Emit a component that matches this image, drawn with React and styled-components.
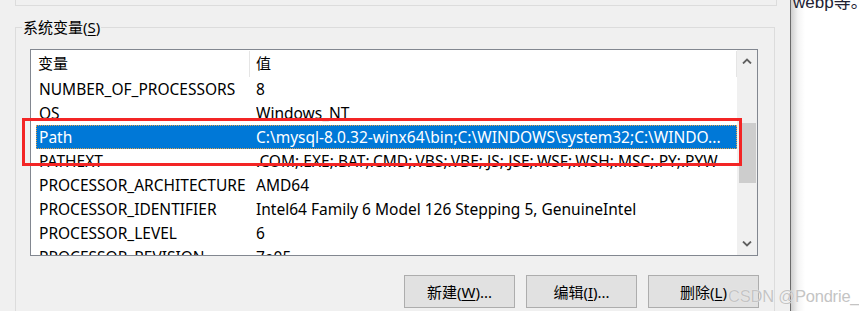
import React from "react";
import styled, { createGlobalStyle } from "styled-components";

// *** Global ***

const GlobalStyle = createGlobalStyle`
  html, body {
    margin: 0;
    padding: 0;
    background: #ffffff;
    overflow: hidden;
  }
`;

const FONT = `"Noto Sans", "Noto Sans CJK SC", sans-serif`;

// *** Styled components ***

const Page = styled.div`
  display: flex;
  width: 859px;
  height: 311px;
  overflow: hidden;
  font-family: ${FONT};
  font-size: 15px;
  color: #000;
  position: relative;
`;

const Dialog = styled.div`
  width: 790px;
  flex-shrink: 0;
  background: #f0f0f0;
  padding-left: 15px;
  box-sizing: border-box;
  display: flex;
  flex-direction: column;
`;

const UpperGroup = styled.div`
  width: 760px;
  height: 5px;
  box-sizing: content-box;
  border: 1px solid #dcdcdc;
  border-top: none;
`;

const GroupBox = styled.div`
  position: relative;
  flex: 1;
  width: 760px;
  margin-top: 21px;
  box-sizing: border-box;
  border: 1px solid #dcdcdc;
  border-bottom: none;
  padding: 21px 0 0 14px;
`;

const Legend = styled.span`
  position: absolute;
  top: -11px;
  left: 6px;
  padding: 0 1px;
  background: #f0f0f0;
  line-height: 20px;
`;

const Key = styled.span`
  text-decoration: underline;
  text-underline-offset: 2px;
`;

const ListBox = styled.div`
  width: 728px;
  height: 207px;
  box-sizing: border-box;
  border: 1px solid #828790;
  background: #fff;
  display: flex;
  overflow: hidden;
`;

const ListArea = styled.div`
  flex: 1;
  min-width: 0;
  overflow: hidden;
`;

const Header = styled.div`
  display: flex;
  height: 27px;
  line-height: 27px;
`;

const HeaderCell = styled.div`
  box-sizing: border-box;
  width: ${(p) => (p.$width ? `${p.$width}px` : "auto")};
  flex: ${(p) => (p.$width ? "none" : "1")};
  padding-left: ${(p) => p.$pad}px;
  position: relative;

  &::after {
    content: "";
    position: absolute;
    right: 0;
    top: 1px;
    bottom: 0;
    width: 1px;
    background: #e5e5e5;
  }
`;

const Row = styled.div`
  display: grid;
  grid-template-columns: 220px 1fr;
  height: 24px;
  line-height: 24px;
  font-size: 15.5px;
  margin-left: 5px;
  box-sizing: border-box;
  white-space: nowrap;
  background: ${(p) => (p.$selected ? "#0078d7" : "transparent")};
  color: ${(p) => (p.$selected ? "#fff" : "#000")};
  outline: ${(p) => (p.$selected ? "1px dotted #e8a24a" : "none")};
  outline-offset: -1px;
`;

const Cell = styled.div`
  padding-left: ${(p) => p.$pad}px;
  overflow: hidden;
`;

const ScrollBar = styled.div`
  width: 20px;
  flex-shrink: 0;
  background: #f0f0f0;
  display: flex;
  flex-direction: column;
`;

const ScrollButton = styled.div`
  height: 22px;
  display: flex;
  align-items: center;
  justify-content: center;
`;

const Track = styled.div`
  flex: 1;
`;

const Thumb = styled.div`
  width: 17px;
  height: 60px;
  margin: 51px auto 0;
  background: #cdcdcd;
`;

const ButtonRow = styled.div`
  width: 729px;
  display: flex;
  justify-content: flex-end;
  gap: 11px;
  margin-top: 19px;
`;

const Button = styled.div`
  width: 111px;
  height: 33px;
  box-sizing: border-box;
  border: 1px solid #adadad;
  background: #e1e1e1;
  display: flex;
  align-items: center;
  justify-content: center;
`;

const Highlight = styled.div`
  position: absolute;
  left: 22px;
  top: 118px;
  width: 720px;
  height: 48px;
  box-sizing: border-box;
  border: 3px solid #f32525;
  pointer-events: none;
`;

const Watermark = styled.div`
  position: absolute;
  left: 728px;
  top: 284px;
  font-family: "Liberation Sans", Arial, sans-serif;
  font-size: 16.5px;
  line-height: 24px;
  letter-spacing: -0.2px;
  white-space: nowrap;
  color: #c4c4c4;
  text-shadow: 0 0 1px #fff;
`;

const RightPane = styled.div`
  flex: 1;
  border-left: 1px solid #6b6b6b;
  background: linear-gradient(to right, #cfcfcf 0, #f4f4f4 7px, #fff 14px);
  overflow: hidden;
`;

const PaneText = styled.div`
  margin: -7px 0 0 2px;
  font-family: "Liberation Sans", "Noto Sans CJK SC", sans-serif;
  font-size: 17px;
  line-height: 20px;
  color: #222233;
  white-space: nowrap;
`;

// *** Data ***

const rows = [
  ["NUMBER_OF_PROCESSORS", "8"],
  ["OS", "Windows_NT"],
  ["Path", "C:\\mysql-8.0.32-winx64\\bin;C:\\WINDOWS\\system32;C:\\WINDO..."],
  ["PATHEXT", ".COM;.EXE;.BAT;.CMD;.VBS;.VBE;.JS;.JSE;.WSF;.WSH;.MSC;.PY;.PYW"],
  ["PROCESSOR_ARCHITECTURE", "AMD64"],
  ["PROCESSOR_IDENTIFIER", "Intel64 Family 6 Model 126 Stepping 5, GenuineIntel"],
  ["PROCESSOR_LEVEL", "6"],
  ["PROCESSOR_REVISION", "7e05"],
];

const Chevron = ({ up }) => (
  <svg width="10" height="6" viewBox="0 0 10 6">
    <polyline
      points={up ? "1,5.5 5,1.5 9,5.5" : "1,0.5 5,4.5 9,0.5"}
      fill="none"
      stroke="#606060"
      strokeWidth="1.8"
    />
  </svg>
);

// *** App ***

export default function App() {
  return (
    <Page>
      <GlobalStyle />
      <Dialog>
        <UpperGroup />
        <GroupBox>
          <Legend>
            系统变量(<Key>S</Key>)
          </Legend>
          <ListBox>
            <ListArea>
              <Header>
                <HeaderCell $width={219} $pad={7}>
                  变量
                </HeaderCell>
                <HeaderCell $pad={6}>值</HeaderCell>
              </Header>
              {rows.map(([name, value]) => (
                <Row key={name} $selected={name === "Path"}>
                  <Cell $pad={3}>{name}</Cell>
                  <Cell $pad={0}>{value}</Cell>
                </Row>
              ))}
            </ListArea>
            <ScrollBar>
              <ScrollButton>
                <Chevron up />
              </ScrollButton>
              <Track>
                <Thumb />
              </Track>
              <ScrollButton>
                <Chevron />
              </ScrollButton>
            </ScrollBar>
          </ListBox>
          <ButtonRow>
            <Button>
              新建(<Key>W</Key>)...
            </Button>
            <Button>
              编辑(<Key>I</Key>)...
            </Button>
            <Button>
              删除(<Key>L</Key>)
            </Button>
          </ButtonRow>
        </GroupBox>
      </Dialog>
      <RightPane>
        <PaneText>webp等。</PaneText>
      </RightPane>
      <Highlight />
      <Watermark>CSDN @Pondrie_</Watermark>
    </Page>
  );
}
